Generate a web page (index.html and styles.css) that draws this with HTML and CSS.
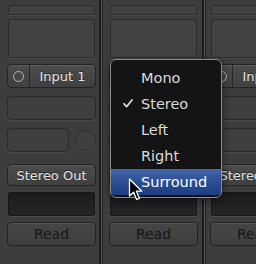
FILE: index.html
```html
<!DOCTYPE html>
<html>
<head>
<meta charset="utf-8">
<link rel="stylesheet" href="styles.css">
</head>
<body>
<div class="mixer">
  <div class="strip strip-first">
    <div class="bar"></div>
    <div class="slot"></div>
    <div class="btn input"><span class="rec"><span class="ring"></span></span><span class="label">Input 1</span></div>
    <div class="field"></div>
    <div class="row"><div class="field small"></div><div class="knob"></div></div>
    <div class="btn out">Stereo Out</div>
    <div class="display"></div>
    <div class="btn read">Read</div>
  </div>
  <div class="divider"></div>
  <div class="strip">
    <div class="bar"></div>
    <div class="slot"></div>
    <div class="btn input"><span class="rec"><span class="ring"></span></span><span class="label"></span></div>
    <div class="field"></div>
    <div class="row"><div class="field small"></div><div class="knob"></div></div>
    <div class="btn out"></div>
    <div class="display"></div>
    <div class="btn read">Read</div>
  </div>
  <div class="divider"></div>
  <div class="strip strip-last">
    <div class="bar"></div>
    <div class="slot"></div>
    <div class="btn input"><span class="rec"><span class="ring"></span></span><span class="label">Input 3</span></div>
    <div class="field"></div>
    <div class="row"><div class="field small"></div><div class="knob"></div></div>
    <div class="btn out">Stereo Out</div>
    <div class="display"></div>
    <div class="btn read">Read</div>
  </div>

  <div class="menu">
    <div class="item">Mono</div>
    <div class="item checked"><svg class="check" width="10" height="9" viewBox="0 0 10 9"><path d="M1 4.8 L3.6 7.6 L9 1" fill="none" stroke="#d8d8d8" stroke-width="1.8" stroke-linecap="round" stroke-linejoin="round"/></svg>Stereo</div>
    <div class="item">Left</div>
    <div class="item">Right</div>
    <div class="item active">Surround</div>
  </div>

  <svg class="cursor" width="16" height="24" viewBox="0 0 16 24"><path d="M1.5 1 L1.5 18 L5.6 14.2 L8.6 21.5 L11.4 20.3 L8.4 13.2 L13.8 13.2 Z" fill="#000" stroke="#fff" stroke-width="1.3" stroke-linejoin="round"/></svg>
</div>
</body>
</html>
```

FILE: styles.css
```css
* { box-sizing: border-box; }
html, body { margin: 0; padding: 0; }
body {
  width: 256px;
  height: 264px;
  overflow: hidden;
  background: #3d3d3d;
  font-family: "DejaVu Sans", "Liberation Sans", sans-serif;
}
.mixer {
  position: relative;
  display: flex;
  width: 256px;
  height: 264px;
  overflow: hidden;
  background: #3d3d3d;
}
.strip {
  flex: 0 0 99px;
  width: 99px;
  padding-left: 6px;
  display: flex;
  flex-direction: column;
}
.strip > * { flex: none; width: 89px; }
.strip-first { padding-left: 7px; }
.strip-last { flex: 1 0 auto; padding-left: 4px; }
.divider {
  flex: 0 0 4px;
  background: linear-gradient(to right, #1c1c1c 0 2px, #555 2px 3px, #232323 3px 4px);
}
.bar, .slot, .field {
  background: #424242;
  border: 1px solid #2a2a2a;
  border-radius: 2px;
  box-shadow: 0 1px 0 rgba(255,255,255,0.07);
}
.bar { margin: 5px 1px 0 1px; width: 87px !important; height: 10px; }
.slot { margin: 4px 1px 0 1px; width: 87px !important; height: 39px; }
.btn {
  height: 24px;
  border: 1px solid #232323;
  border-radius: 4px;
  background: linear-gradient(#4c4c4c, #404040);
  box-shadow: inset 0 1px 0 rgba(255,255,255,0.09);
  color: #e4e4e4;
  font-size: 13px;
  display: flex;
  align-items: center;
  justify-content: center;
  text-shadow: 0 -1px 0 rgba(0,0,0,0.5);
  white-space: nowrap;
}
.input { margin-top: 6px; justify-content: flex-start; }
.rec {
  width: 22px;
  height: 100%;
  border-right: 1px solid #262626;
  display: flex;
  align-items: center;
  justify-content: center;
}
.ring {
  width: 11px;
  height: 11px;
  border: 1.5px solid #b8b8b8;
  border-radius: 50%;
}
.label { flex: 1; text-align: center; }
.field { margin-top: 8px; height: 24px; border-radius: 4px; background: #3f3f3f; }
.row {
  margin-top: 8px;
  height: 24px;
  display: flex;
  align-items: center;
  gap: 6px;
}
.row .field.small { margin-top: 0; width: 62px; height: 24px; }
.knob {
  width: 21px;
  height: 21px;
  border-radius: 50%;
  border: 1px solid #2b2b2b;
  background: #3f3f3f;
  box-shadow: 0 1px 0 rgba(255,255,255,0.06);
}
.out { margin-top: 12px; height: 22px; }
.display {
  margin: 6px 1px 0 1px;
  width: 87px !important;
  height: 24px;
  background: linear-gradient(#1b1b1b, #262626);
  border: 1px solid #161616;
  border-radius: 2px;
  box-shadow: 0 1px 0 rgba(255,255,255,0.08);
}
.read {
  margin-top: 6px;
  background: linear-gradient(#454545, #3f3f3f);
  color: #161616;
  font-size: 14px;
  text-shadow: none;
}
.menu {
  position: absolute;
  left: 110px;
  top: 59px;
  width: 112px;
  height: 139px;
  padding-top: 5px;
  background: #141414;
  border: 1px solid #8a8a8a;
  border-radius: 6px;
  box-shadow: 0 3px 8px rgba(0,0,0,0.5);
  overflow: hidden;
}
.item {
  position: relative;
  height: 26px;
  line-height: 26px;
  padding-left: 30px;
  font-size: 14.5px;
  color: #dadada;
}
.check { position: absolute; left: 12px; top: 8px; }
.active {
  background: linear-gradient(#4468ab, #2a4d93 50%, #1d3d80);
  color: #fff;
}
.cursor { position: absolute; left: 128px; top: 178px; }
```
